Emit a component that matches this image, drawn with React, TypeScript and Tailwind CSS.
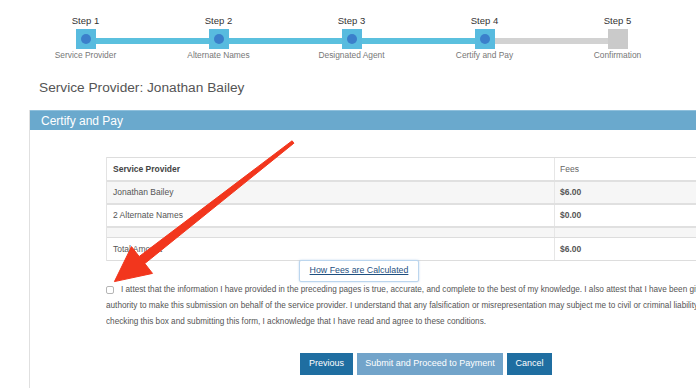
import * as React from 'react';

const steps = [
  { label: 'Step 1', sub: 'Service Provider', done: true },
  { label: 'Step 2', sub: 'Alternate Names', done: true },
  { label: 'Step 3', sub: 'Designated Agent', done: true },
  { label: 'Step 4', sub: 'Certify and Pay', done: true },
  { label: 'Step 5', sub: 'Confirmation', done: false },
];

const rows = [
  { name: 'Jonathan Bailey', fee: '$6.00', shade: true },
  { name: '2 Alternate Names', fee: '$0.00', shade: false },
];

// progress bar across the top
function Stepper() {
  return (
    <div className="pt-[15px] pl-[19px]">
      <div className="grid grid-cols-[repeat(5,133px)] text-[9.5px] leading-[12px] text-[#333]">
        {steps.map((s) => (
          <div key={s.label} className="text-center">
            {s.label}
          </div>
        ))}
      </div>
      <div className="flex items-start pl-[57px] pt-[2px]">
        {steps.map((s, i) => (
          <React.Fragment key={s.label}>
            <div
              className={
                s.done
                  ? 'flex h-[20px] w-[20px] items-center justify-center bg-[#58bbdf]'
                  : 'h-[20px] w-[20px] bg-[#cacaca]'
              }
            >
              {s.done && <div className="h-[10px] w-[10px] rounded-full bg-[#3b7fcb]" />}
            </div>
            {i < steps.length - 1 && (
              <div
                className={
                  steps[i + 1].done
                    ? 'mt-[9px] h-[6px] w-[113px] bg-[#5bc0de]'
                    : 'mt-[9px] h-[6px] w-[113px] bg-[#d2d2d2]'
                }
              />
            )}
          </React.Fragment>
        ))}
      </div>
      <div className="mt-[1px] grid grid-cols-[repeat(5,133px)] text-[8.4px] leading-[10px] text-[#777]">
        {steps.map((s) => (
          <div key={s.sub} className="text-center">
            {s.sub}
          </div>
        ))}
      </div>
    </div>
  );
}

function FeeTable() {
  return (
    <div className="w-[660px] border-l border-[#e3e3e3] text-[8.5px] text-[#555]">
      <div className="grid h-[23px] grid-cols-[447px_1fr] items-center border-t border-[#ddd]">
        <div className="pl-[6px] font-bold text-[#444]">Service Provider</div>
        <div className="flex h-full items-center border-l border-[#e6e6e6] pl-[5px] text-[#666]">Fees</div>
      </div>
      {rows.map((r) => (
        <div
          key={r.name}
          className={
            r.shade
              ? 'grid h-[23px] grid-cols-[447px_1fr] items-center border-t-2 border-[#e0e0e0] bg-[#f6f6f6]'
              : 'grid h-[23px] grid-cols-[447px_1fr] items-center border-t-2 border-[#e0e0e0] bg-white'
          }
        >
          <div className="pl-[6px]">{r.name}</div>
          <div className="flex h-full items-center border-l border-[#e6e6e6] pl-[5px] font-bold">{r.fee}</div>
        </div>
      ))}
      <div className="grid h-[11px] grid-cols-[447px_1fr] border-t-2 border-[#e0e0e0] bg-[#f6f6f6]">
        <div />
        <div className="border-l border-[#e6e6e6]" />
      </div>
      <div className="grid h-[24px] grid-cols-[447px_1fr] items-center border-y border-[#ddd]">
        <div className="pl-[6px]">Total Amount</div>
        <div className="flex h-full items-center border-l border-[#e6e6e6] pl-[5px] font-bold">$6.00</div>
      </div>
    </div>
  );
}

export default function App() {
  return (
    <div className="relative h-[388px] w-[696px] overflow-hidden bg-white font-['Liberation_Sans',Arial,sans-serif] text-[#333]">
      <div className="w-[800px]">
        <Stepper />

        <h1 className="mt-[20px] pl-[39px] text-[13.7px] leading-[16px] text-[#555]">
          Service Provider: Jonathan Bailey
        </h1>

        <div className="ml-[29px] mt-[14px] h-[300px] border-l border-[#e0e0e0]">
          <div className="flex h-[20px] items-center border-t border-[#8fc0dc] bg-[#6aa9cd] pl-[11px] text-[12px] text-white">
            Certify and Pay
          </div>

          <div className="pl-[76px] pt-[27px]">
            <FeeTable />

            <div className="ml-[193px] -mt-px flex h-[22px] w-[120px] items-center justify-center rounded-[2px] border border-[#bcd6ee] bg-white text-[8.8px] text-[#1d4f80] underline shadow-[0_0_2px_rgba(120,170,220,0.5)]">
              How Fees are Calculated
            </div>

            <div className="overflow-hidden text-[8.2px] leading-[16px] text-[#555] whitespace-nowrap">
              <div className="flex items-center">
                <span className="mr-[7px] inline-block h-[8px] w-[8px] shrink-0 rounded-[2px] border border-[#b5b5b5] bg-white" />
                I attest that the information I have provided in the preceding pages is true, accurate, and complete to the best of my knowledge. I also attest that I have been given the
              </div>
              <div>
                authority to make this submission on behalf of the service provider. I understand that any falsification or misrepresentation may subject me to civil or criminal liability. By
              </div>
              <div>
                checking this box and submitting this form, I acknowledge that I have read and agree to these conditions.
              </div>
            </div>

            <div className="ml-[194px] mt-[23px] flex gap-[4px] text-[9px] text-white">
              <button className="h-[22px] w-[53px] bg-[#1f6ea1]">Previous</button>
              <button className="h-[22px] w-[146px] bg-[#72a4ca]">Submit and Proceed to Payment</button>
              <button className="h-[22px] w-[45px] bg-[#1f6ea1]">Cancel</button>
            </div>
          </div>
        </div>
      </div>

      {/* red annotation arrow */}
      <svg className="pointer-events-none absolute left-0 top-0" width="696" height="388" viewBox="0 0 696 388">
        <polygon
          points="292.1,140.8 139.2,256.5 131.5,246.6 114.4,281.6 152.5,273.4 144.8,263.5 293.9,143.2"
          fill="#f2361d"
          stroke="#f2361d"
          strokeWidth="1"
          strokeLinejoin="round"
        />
      </svg>
    </div>
  );
}
